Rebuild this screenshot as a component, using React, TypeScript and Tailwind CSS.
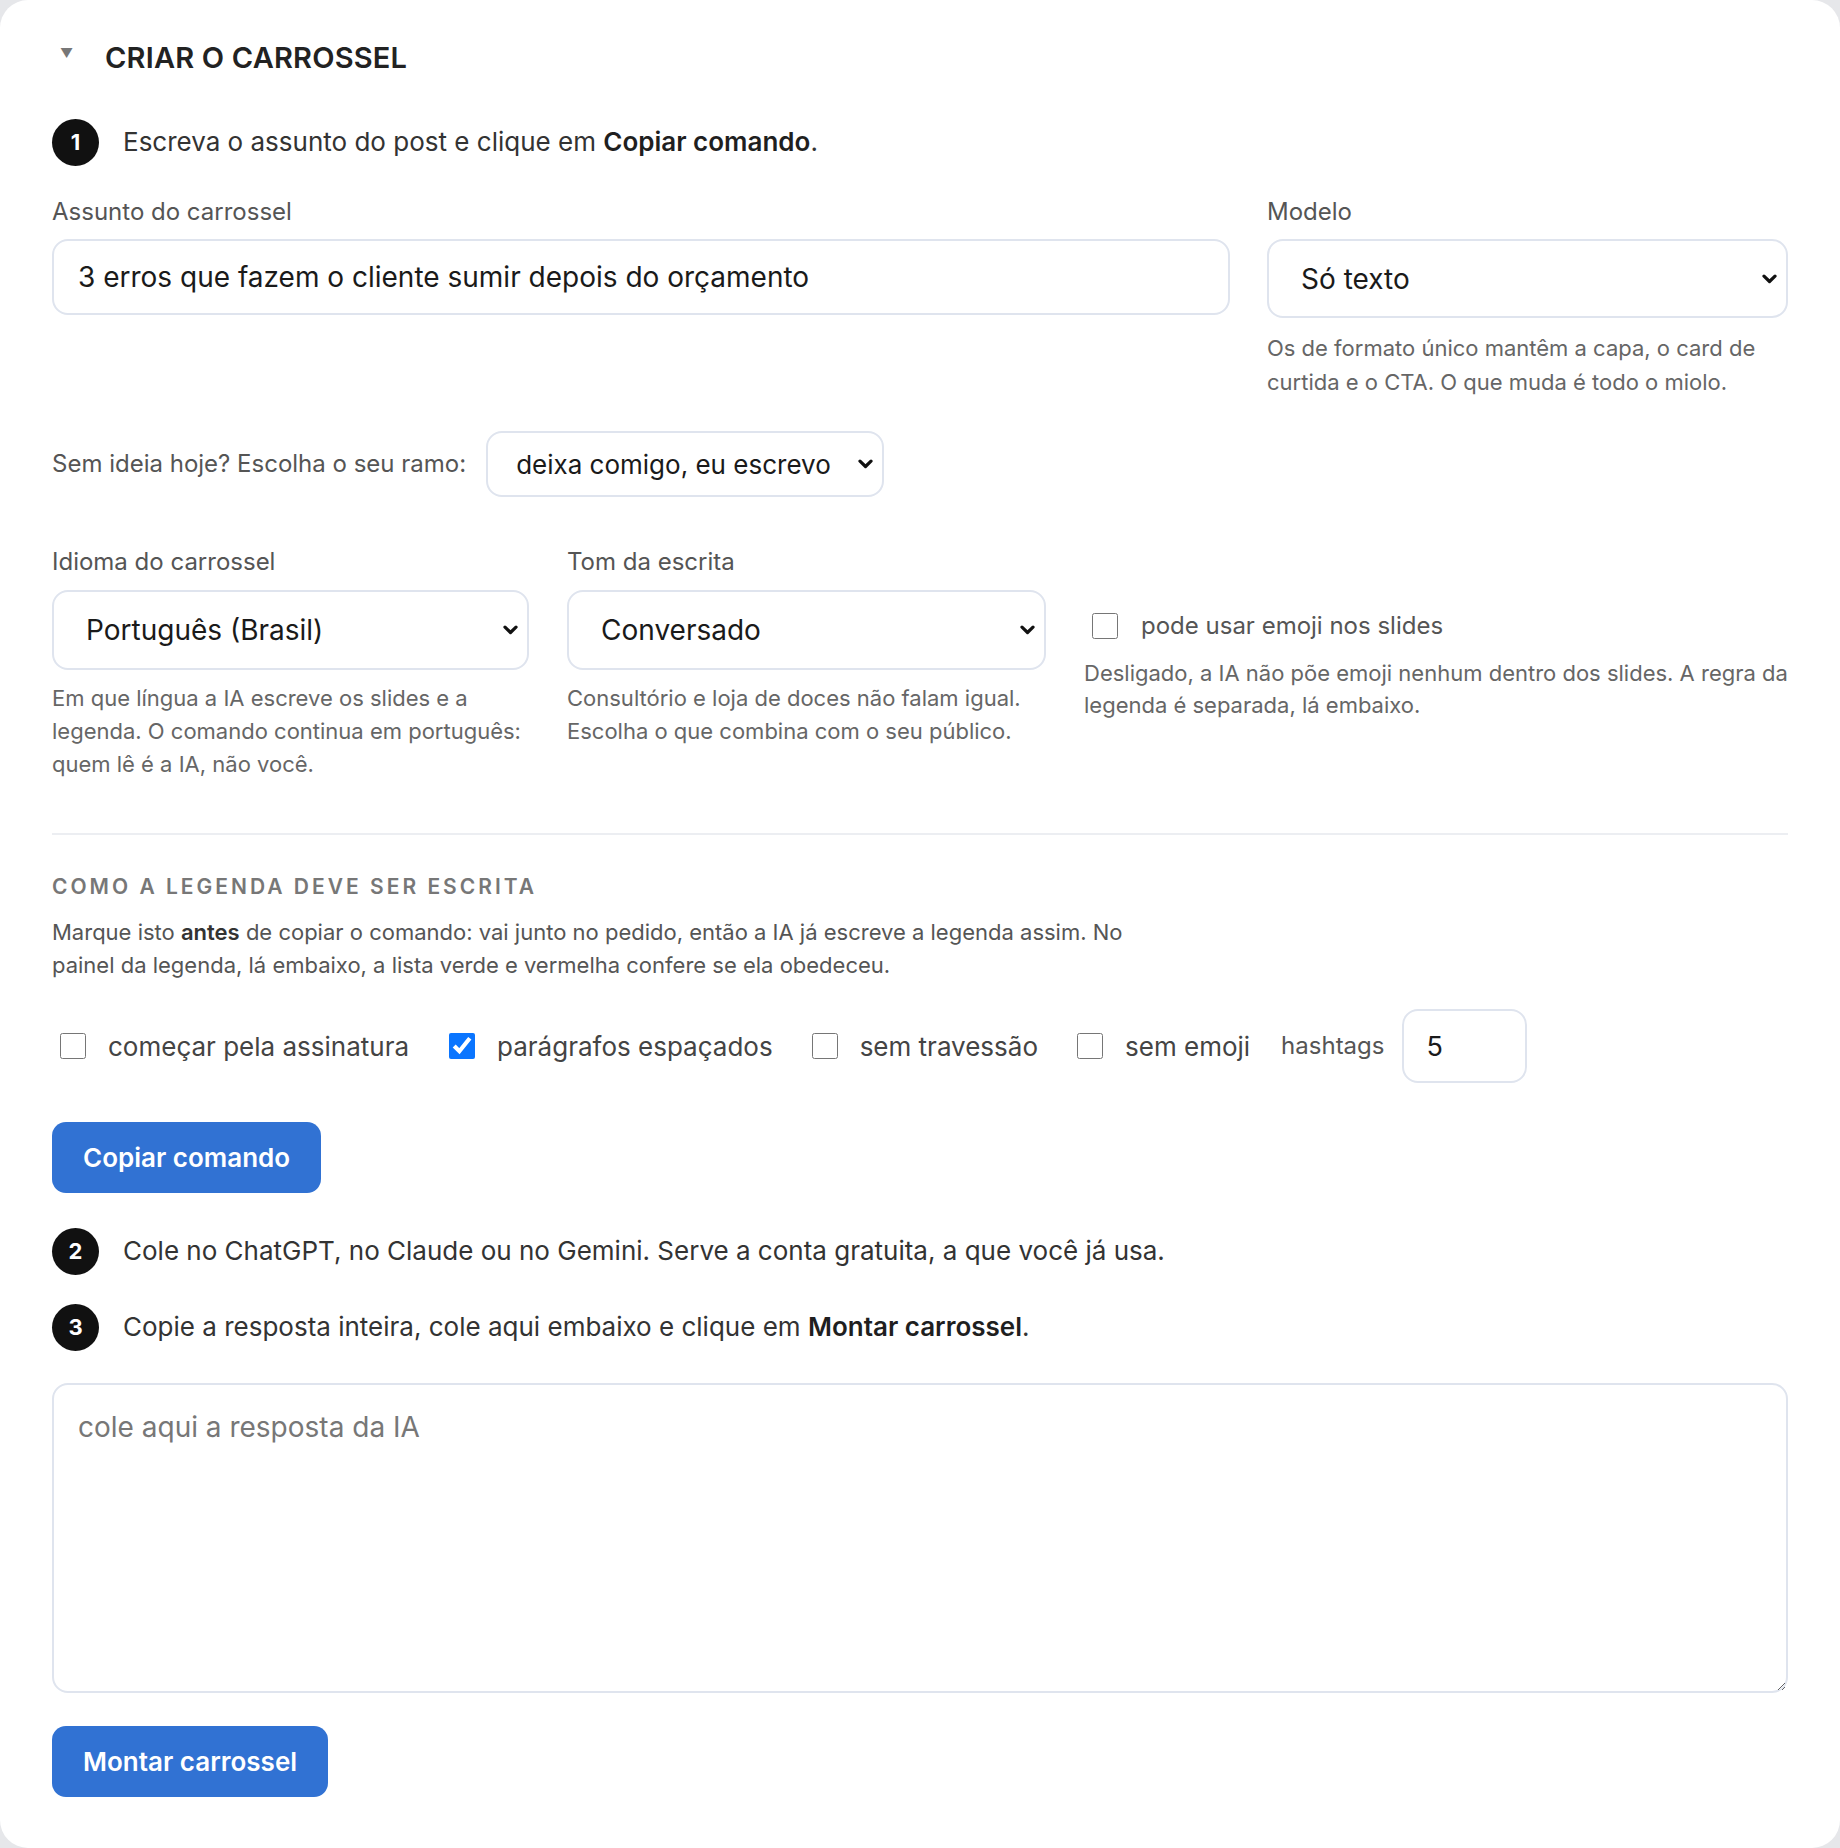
import React from 'react';

const StepBadge: React.FC<{ n: number }> = ({ n }) => (
  <span className="w-[47px] h-[47px] shrink-0 rounded-full bg-[#111111] text-white flex items-center justify-center text-[22px] font-bold">
    {n}
  </span>
);

const Step: React.FC<{ n: number; children: React.ReactNode }> = ({ n, children }) => (
  <div className="flex items-center gap-[24px]">
    <StepBadge n={n} />
    <p className="text-[26px] leading-[34px] text-[#333333] -mt-[2px]">{children}</p>
  </div>
);

const Check: React.FC<{ label: string; checked?: boolean; className?: string }> = ({ label, checked, className }) => (
  <label className={`flex items-center gap-[22px] ${className ?? ''}`}>
    <input type="checkbox" defaultChecked={checked} className="w-[26px] h-[26px] m-0 accent-[#0a75ff]" />
    <span>{label}</span>
  </label>
);

const fieldCls = 'w-full bg-white border-2 border-[#dfe4ee] rounded-[16px] text-[#1a1a1a] outline-none';

const Select: React.FC<{ value: string; className: string; wrap?: string }> = ({ value, className, wrap }) => (
  <div className={`relative ${wrap ?? ''}`}>
    <select className={`${fieldCls} appearance-none ${className}`} defaultValue={value}>
      <option value={value}>{value}</option>
    </select>
    <svg
      className="absolute right-[11px] top-1/2 -translate-y-1/2 w-[15px] h-[10px] pointer-events-none"
      viewBox="0 0 15 10"
      fill="none"
      stroke="#111111"
      strokeWidth="3.2"
      strokeLinecap="round"
      strokeLinejoin="round"
    >
      <path d="M2 2.2l5.5 5.3L13 2.2" />
    </svg>
  </div>
);

export default function App() {
  return (
    <div className="min-h-screen bg-[#e6e7ea] font-['Inter','Noto_Sans',sans-serif]">
      <div className="bg-white rounded-[28px] min-h-[1848px] px-[52px] pt-[41px] pb-[40px]">
        {/* cabeçalho */}
        <div className="flex items-center h-[34px]">
          <span className="w-[53px] pl-[8px] text-[13px] text-[#777777] -mt-[8px]">▼</span>
          <h2 className="text-[29px] font-semibold tracking-[0.2px] text-[#222222]">CRIAR O CARROSSEL</h2>
        </div>

        <div className="mt-[44px]">
          <Step n={1}>
            Escreva o assunto do post e clique em <b className="font-semibold text-[#1f1f1f]">Copiar comando</b>.
          </Step>
        </div>

        <div className="grid grid-cols-[1178px_1fr] gap-[37px] mt-[31px]">
          <div>
            <label className="block text-[24px] leading-[30px] text-[#555555]">Assunto do carrossel</label>
            <input
              className={`${fieldCls} mt-[12px] h-[76px] px-[24px] text-[28px]`}
              defaultValue="3 erros que fazem o cliente sumir depois do orçamento"
            />
          </div>
          <div>
            <label className="block text-[24px] leading-[30px] text-[#555555]">Modelo</label>
            <Select value="Só texto" wrap="mt-[12px]" className="h-[79px] pl-[32px] pr-[40px] text-[28px]" />
            <p className="mt-[13px] text-[22px] leading-[34px] text-[#666666]">
              Os de formato único mantêm a capa, o card de curtida e o CTA. O que muda é todo o miolo.
            </p>
          </div>
        </div>

        <div className="flex items-center gap-[20px] mt-[32px]">
          <span className="text-[24px] text-[#555555]">Sem ideia hoje? Escolha o seu ramo:</span>
          <Select value="deixa comigo, eu escrevo" wrap="w-[398px]" className="h-[66px] pl-[28px] pr-[40px] text-[26px]" />
        </div>

        <div className="grid grid-cols-[477px_479px_1fr] gap-[38px] mt-[50px]">
          <div>
            <label className="block text-[24px] leading-[30px] text-[#555555]">Idioma do carrossel</label>
            <Select value="Português (Brasil)" wrap="mt-[13px]" className="h-[80px] pl-[32px] pr-[40px] text-[28px]" />
            <p className="mt-[12px] text-[22px] leading-[33px] text-[#666666]">
              Em que língua a IA escreve os slides e a legenda. O comando continua em português: quem lê é a IA, não você.
            </p>
          </div>
          <div>
            <label className="block text-[24px] leading-[30px] text-[#555555]">Tom da escrita</label>
            <Select value="Conversado" wrap="mt-[13px]" className="h-[80px] pl-[32px] pr-[40px] text-[28px]" />
            <p className="mt-[12px] text-[22px] leading-[33px] text-[#666666]">
              Consultório e loja de doces não falam igual. Escolha o que combina com o seu público.
            </p>
          </div>
          <div className="pt-[64px]">
            <Check label="pode usar emoji nos slides" className="h-[30px] pl-[8px] !gap-[23px] text-[24px] text-[#555555]" />
            <p className="mt-[16px] text-[22px] leading-[32px] text-[#666666]">
              Desligado, a IA não põe emoji nenhum dentro dos slides. A regra da legenda é separada, lá embaixo.
            </p>
          </div>
        </div>

        <hr className="mt-[52px] border-0 border-t-2 border-[#eceef2]" />

        <h3 className="mt-[38px] text-[21px] leading-[28px] font-semibold tracking-[3px] text-[#777777]">
          COMO A LEGENDA DEVE SER ESCRITA
        </h3>
        <p className="mt-[15px] max-w-[1110px] text-[22px] leading-[33px] text-[#555555]">
          Marque isto <b className="font-semibold text-[#333333]">antes</b> de copiar o comando: vai junto no pedido, então a IA já escreve a legenda assim. No painel da legenda, lá embaixo, a lista verde e vermelha confere se ela obedeceu.
        </p>

        <div className="flex items-center mt-[27px] text-[26px] text-[#444444]">
          <Check label="começar pela assinatura" className="ml-[8px]" />
          <Check label="parágrafos espaçados" checked className="ml-[40px]" />
          <Check label="sem travessão" className="ml-[39px]" />
          <Check label="sem emoji" className="ml-[39px]" />
          <span className="ml-[31px] text-[24px] text-[#555555]">hashtags</span>
          <input className={`${fieldCls} !w-[125px] h-[74px] ml-[18px] px-[22px] text-[27px]`} defaultValue="5" />
        </div>

        <button className="mt-[39px] h-[71px] px-[31px] rounded-[14px] bg-[#3172d3] text-white text-[26px] font-semibold">
          Copiar comando
        </button>

        <div className="mt-[35px] flex flex-col gap-[29px]">
          <Step n={2}>Cole no ChatGPT, no Claude ou no Gemini. Serve a conta gratuita, a que você já usa.</Step>
          <Step n={3}>
            Copie a resposta inteira, cole aqui embaixo e clique em <b className="font-semibold text-[#1f1f1f]">Montar carrossel</b>.
          </Step>
        </div>

        <textarea
          className={`${fieldCls} block mt-[32px] h-[310px] px-[24px] py-[21px] text-[28px] placeholder:text-[#777777]`}
          placeholder="cole aqui a resposta da IA"
        />

        <button className="mt-[33px] h-[71px] px-[31px] rounded-[14px] bg-[#3172d3] text-white text-[26px] font-semibold">
          Montar carrossel
        </button>
      </div>
    </div>
  );
}
